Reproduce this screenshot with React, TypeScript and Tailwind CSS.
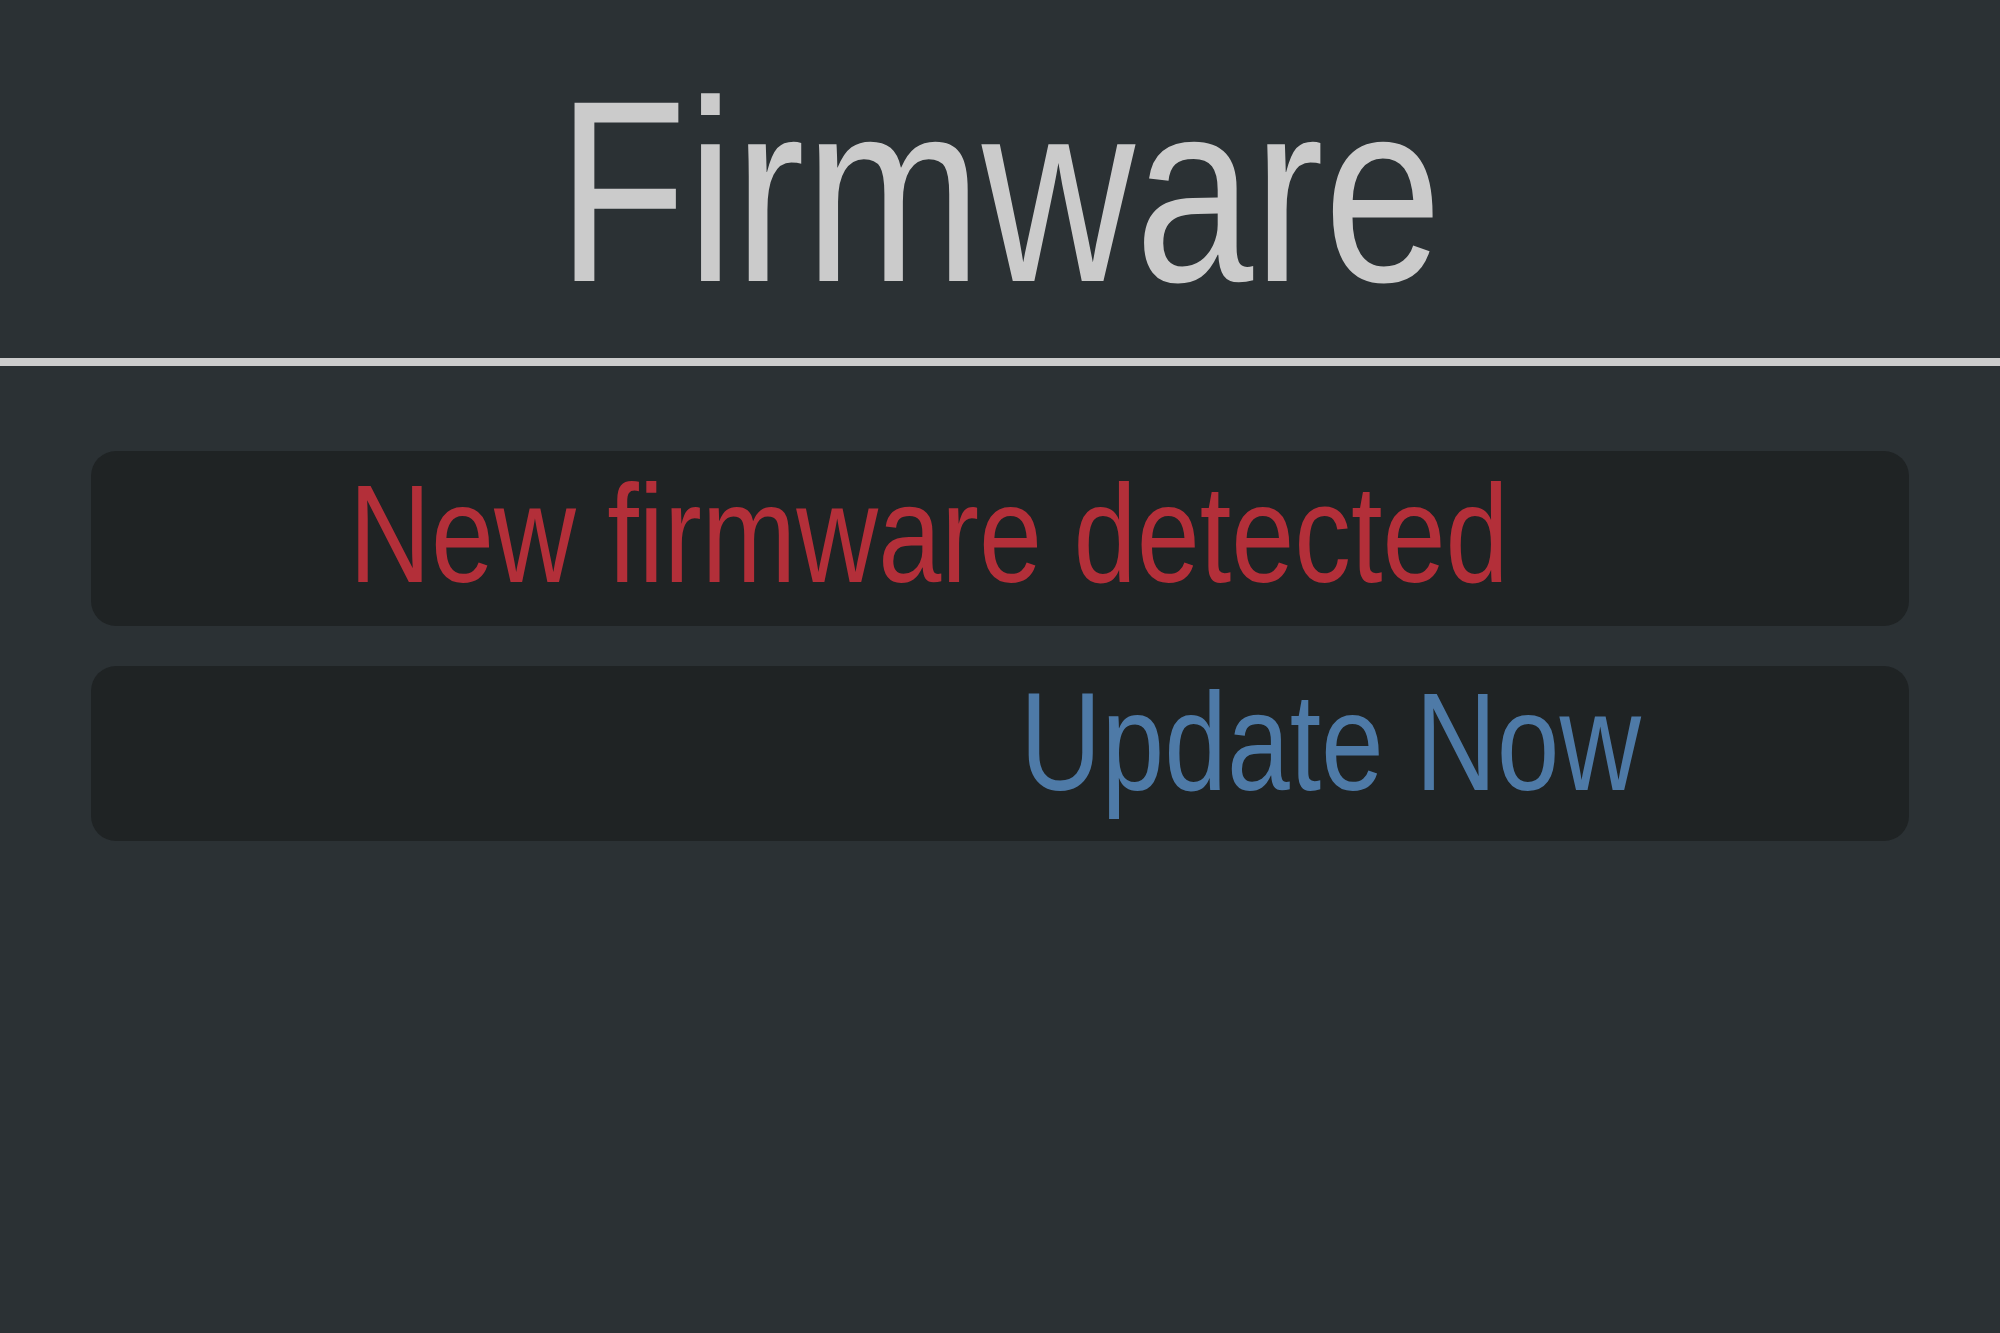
import React from "react";

export default function App() {
  const font = {
    fontFamily: "'Liberation Sans Narrow', 'Arial Narrow', 'Liberation Sans', Arial, sans-serif",
  };
  return (
    <div className="min-h-screen w-full bg-[#2b3134] flex flex-col" style={font}>
      <h1 className="h-[358px] pt-[62px] text-center text-[259px] leading-none font-normal text-[#cbcbcb]">
        <span className="inline-block scale-x-[0.82] origin-center">Firmware</span>
      </h1>
      <div className="h-[8px] bg-[#cccccc]" />
      <div className="px-[91px] pt-[85px] flex flex-col gap-[40px]">
        <div className="h-[175px] rounded-[25px] bg-[#1f2324] pl-[258px] pt-[13px] text-[140px] leading-none text-[#b32f39] whitespace-nowrap">
          <span className="inline-block scale-x-[0.81] origin-left">New firmware detected</span>
        </div>
        <div className="h-[175px] rounded-[25px] bg-[#1f2324] pl-[929px] pt-[6px] text-[140px] leading-none text-[#4e7aa7] whitespace-nowrap">
          <span className="inline-block scale-x-[0.806] origin-left">Update Now</span>
        </div>
      </div>
    </div>
  );
}
